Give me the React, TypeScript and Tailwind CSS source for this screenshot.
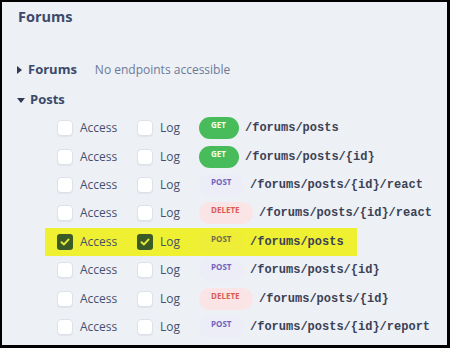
import React from 'react';

type Method = 'GET' | 'POST' | 'DELETE';

const endpoints: { method: Method; path: string; checked?: boolean }[] = [
  { method: 'GET', path: '/forums/posts' },
  { method: 'GET', path: '/forums/posts/{id}' },
  { method: 'POST', path: '/forums/posts/{id}/react' },
  { method: 'DELETE', path: '/forums/posts/{id}/react' },
  { method: 'POST', path: '/forums/posts', checked: true },
  { method: 'POST', path: '/forums/posts/{id}' },
  { method: 'DELETE', path: '/forums/posts/{id}' },
  { method: 'POST', path: '/forums/posts/{id}/report' },
];

const badgeClass: Record<Method, string> = {
  GET: 'bg-[#48bb5b] text-[#f4ffe8] w-[40px]',
  POST: 'bg-[#ecedf7] text-[#6e64bd] w-[45px]',
  DELETE: 'bg-[#fbe4e6] text-[#dc5a55] w-[54px]',
};

const Checkbox: React.FC<{ checked?: boolean }> = ({ checked }) =>
  checked ? (
    <span className="flex h-[16px] w-[16px] shrink-0 items-center justify-center rounded-[3px] bg-[#3a5b26]">
      <svg width="10" height="8" viewBox="0 0 10 8">
        <path d="M1.5 4.2 L4 6.4 L8.5 1.6" fill="none" stroke="#e6ec3a" strokeWidth="2" strokeLinecap="round" strokeLinejoin="round" />
      </svg>
    </span>
  ) : (
    <span className="h-[16px] w-[16px] shrink-0 rounded-[4px] border border-[#dde2ea] bg-white shadow-[0_1px_1px_rgba(0,0,0,0.05)]" />
  );

export default function App() {
  return (
    <div className="h-[348px] w-[450px] overflow-hidden border-t-2 border-l-2 border-r-[3px] border-b-[3px] border-black bg-[#edf0f5] font-['Open_Sans',sans-serif] text-[#3c4a69]">
      <div className="flex h-[30px] items-center pl-[16px] text-[14.5px] font-bold">Forums</div>

      <div className="mt-[23px] flex h-[30px] items-center pl-[15px]">
        <svg width="5" height="8" viewBox="0 0 5 8" className="mr-[6px]">
          <path d="M0 0 L5 4 L0 8 Z" fill="#313a52" />
        </svg>
        <span className="text-[13px] font-bold">Forums</span>
        <span className="ml-[18px] text-[12px] text-[#6b7a98]">No endpoints accessible</span>
      </div>

      <div className="mt-px flex h-[28px] items-center pl-[15px]">
        <svg width="8" height="5" viewBox="0 0 8 5" className="mr-[5px]">
          <path d="M0 0 L8 0 L4 5 Z" fill="#313a52" />
        </svg>
        <span className="text-[13px] font-bold">Posts</span>
      </div>

      <div className="flex flex-col">
        {endpoints.map((e, i) => (
          <div key={i} className="flex h-[28.43px] items-center pl-[43px]">
            <div className={`flex h-full w-[312px] shrink-0 items-center overflow-visible whitespace-nowrap pl-[12px] ${e.checked ? 'bg-[#f0f032]' : ''}`}>
              <div className="flex w-[80px] shrink-0 items-center">
                <Checkbox checked={e.checked} />
                <span className="ml-[7px] text-[12px] text-[#46506e]">Access</span>
              </div>
              <div className="flex w-[62px] shrink-0 items-center">
                <Checkbox checked={e.checked} />
                <span className="ml-[7px] text-[12px] text-[#46506e]">Log</span>
              </div>
              <span
                className={`flex h-[22px] shrink-0 items-start rounded-full pl-[12px] pt-[3px] text-[8px] font-bold leading-[10px] ${
                  e.checked ? 'w-[45px] bg-[#eeee38] text-[#6f6d4a]' : badgeClass[e.method]
                }`}
              >
                {e.method}
              </span>
              <span className="ml-[6px] shrink-0 font-['Liberation_Mono',monospace] text-[12px] font-bold text-[#3b4256]">{e.path}</span>
            </div>
          </div>
        ))}
      </div>
    </div>
  );
}
